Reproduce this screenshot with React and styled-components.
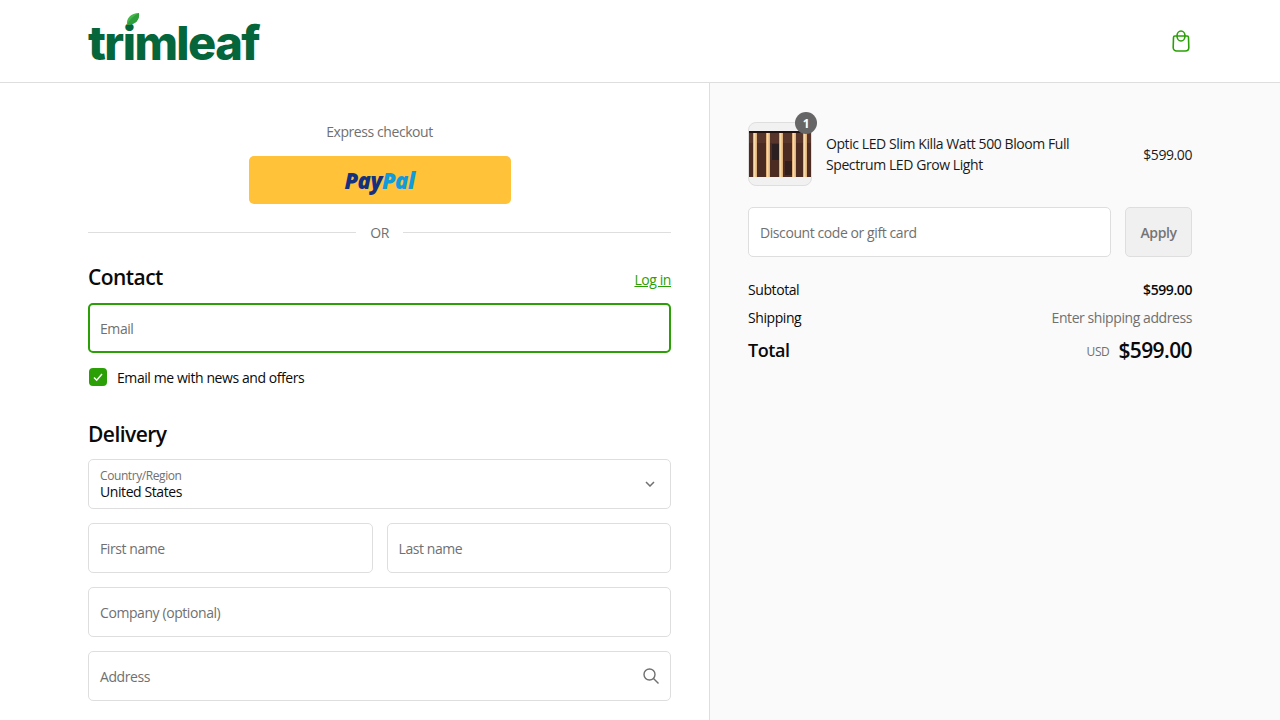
import React from 'react';
import styled, { createGlobalStyle } from 'styled-components';

const Global = createGlobalStyle`
  html, body { margin: 0; padding: 0; height: 720px; overflow: hidden; background: #fff; }
  * { box-sizing: border-box; }
  body { font-family: "Open Sans", "Noto Sans", sans-serif; font-size: 14px; letter-spacing: -0.42px; color: #0a0a0a; }
`;

const Page = styled.div`height: 720px; display: flex; flex-direction: column;`;
const Header = styled.header`
  height: 83px; flex: none; border-bottom: 1px solid #dedede; padding: 0 88px;
  display: flex; align-items: center; justify-content: space-between;
`;
const Logo = styled.div`
  position: relative; font-family: Inter, sans-serif; font-weight: 800; font-size: 47px; line-height: 50px;
  letter-spacing: -1.6px; color: #04663a; margin-top: 3px; width: 180px;
`;
const LeafIcon = styled.svg`position: absolute; left: 38px; top: -6px;`;
const BagButton = styled.a`display: flex; color: #2a9f06;`;
const Main = styled.main`flex: 1; display: grid; grid-template-columns: 710px 570px; min-height: 0;`;
const Left = styled.section`border-right: 1px solid #dedede; padding: 38px 38px 0 88px; display: flex; flex-direction: column;`;
const Right = styled.aside`background: #fafafa; padding: 38px 88px 0 38px; display: flex; flex-direction: column;`;

const Express = styled.div`text-align: center; color: #707070; font-size: 14px; line-height: 22px; height: 22px;`;
const PayButton = styled.div`
  width: 262px; height: 48px; margin: 13px auto 0; border-radius: 5px; background: #ffc238;
  display: flex; align-items: center; justify-content: center;
  font-family: "Open Sans", sans-serif; font-weight: 800; font-style: italic; font-size: 22px; letter-spacing: -0.5px;
`;
const PayDark = styled.span`color: #14307f;`;
const PayLight = styled.span`color: #0f9bdc;`;
const Divider = styled.div`
  display: flex; align-items: center; gap: 14px; margin-top: 17px; height: 22px; color: #707070; font-size: 14px;
  &::before, &::after { content: ""; flex: 1; height: 1px; background: #dedede; }
`;
const HeadRow = styled.div`display: flex; align-items: center; justify-content: space-between; margin-top: ${p => p.$top}px; height: 30px;`;
const Heading = styled.h2`margin: 0; font-size: 21px; font-weight: 600; line-height: 30px; letter-spacing: -0.55px; color: #0a0a0a;`;
const LogIn = styled.a`color: #2a9f06; text-decoration: underline; font-size: 14px; margin-top: 5px;`;
const Field = styled.div`
  position: relative; height: 50px; flex: 1; min-width: 0; background: #fff; border-radius: 5px;
  border: ${p => (p.$focus ? '2px solid #2a9f06' : '1px solid #dedede')};
  padding: 0 ${p => (p.$focus ? 10 : 11)}px; display: flex; align-items: center; justify-content: space-between;
  color: #707070; font-size: 14px; margin-top: ${p => p.$top || 0}px;
`;
const FieldRow = styled.div`display: flex; gap: 14px; margin-top: 14px;`;
const CheckRow = styled.label`display: flex; align-items: center; gap: 10px; margin: 15px 0 0 1px; height: 18px; color: #0a0a0a;`;
const CheckBox = styled.span`width: 18px; height: 18px; border-radius: 4px; background: #2a9f06; display: flex; align-items: center; justify-content: center; color: #fff;`;
const SelectBody = styled.div`display: flex; flex-direction: column;`;
const SelectLabel = styled.span`font-size: 12px; line-height: 16px; color: #707070;`;
const SelectValue = styled.span`font-size: 14px; line-height: 16px; color: #0a0a0a;`;
const FieldIcon = styled.svg`flex: none; color: #707070;`;

const Product = styled.div`display: flex; align-items: center; height: 64px; margin-top: 1px;`;
const Thumb = styled.div`
  position: relative; width: 64px; height: 64px; flex: none; border-radius: 8px; border: 1px solid #dedede; background: #f1f1f1;
  display: flex; align-items: center;
`;
const Badge = styled.span`
  position: absolute; top: -11px; right: -6px; width: 22px; height: 22px; border-radius: 50%; background: #666;
  color: #fff; font-size: 12px; font-weight: 700; display: flex; align-items: center; justify-content: center;
`;
const ProductName = styled.div`flex: 1; margin-left: 14px; line-height: 21px; max-width: 270px; color: #1a1a1a;`;
const Price = styled.div`margin-left: auto; color: #1a1a1a;`;
const Discount = styled.div`display: flex; gap: 14px; margin-top: 21px;`;
const Apply = styled.div`
  width: 67px; height: 50px; flex: none; background: #f0f0f0; border: 1px solid #dedede; border-radius: 5px;
  display: flex; align-items: center; justify-content: center; font-weight: 600; color: #757575;
`;
const SumRow = styled.div`display: flex; align-items: center; justify-content: space-between; height: 20px; margin-top: ${p => p.$top}px;`;
const SumStrong = styled.span`font-weight: 600;`;
const Muted = styled.span`color: #707070;`;
const TotalRow = styled.div`display: flex; align-items: center; justify-content: space-between; margin-top: 8px; height: 30px;`;
const TotalLabel = styled.span`font-size: 18px; font-weight: 600; letter-spacing: -0.45px;`;
const TotalValue = styled.span`display: flex; align-items: center; gap: 9px;`;
const Currency = styled.span`font-size: 12px; color: #707070; margin-top: 3px;`;
const Amount = styled.span`font-size: 21px; font-weight: 600; letter-spacing: -0.6px;`;

const stripes = [4, 17, 30, 43, 54];
const LedImage = () => (
  <svg width="62" height="46" viewBox="0 0 62 46">
    <rect width="62" height="46" fill="#4b2b22" />
    <rect y="0" width="62" height="2" fill="#241210" />
    <rect x="0" y="2" width="62" height="10" fill="#5f3c30" opacity=".6" />
    <rect x="23" y="13" width="9" height="16" fill="#2c1f22" />
    <rect x="36" y="30" width="8" height="14" fill="#33201d" />
    {stripes.map((x, i) => (
      <g key={x}>
        <rect x={x} y="2" width="4" height="44" fill="#e3b27c" />
        <rect x={x + 1} y="2" width="1.5" height="44" fill="#f5dca8" />
      </g>
    ))}
  </svg>
);

export default function App() {
  return (
    <Page>
      <Global />
      <Header>
        <Logo>
          trimleaf
          <LeafIcon width="14" height="14" viewBox="0 0 14 14">
            <path d="M1 13C0 6 5 1 13 1c1 7-4 12-12 12z" fill="#45b649" />
            <path d="M1 13C3 8 7 4 13 1c1 7-4 12-12 12z" fill="#2f9e3c" />
          </LeafIcon>
        </Logo>
        <BagButton>
          <svg width="22" height="24" viewBox="0 0 22 24" fill="none" stroke="currentColor" strokeWidth="1.6">
            <path d="M3.5 8.5c0-.8.6-1.5 1.4-1.5h12.2c.8 0 1.4.7 1.4 1.5l.3 10c0 2-1.5 3.5-3.5 3.5H6.7c-2 0-3.5-1.5-3.5-3.5z" />
            <ellipse cx="11" cy="7" rx="4" ry="5" />
          </svg>
        </BagButton>
      </Header>
      <Main>
        <Left>
          <Express>Express checkout</Express>
          <PayButton><PayDark>Pay</PayDark><PayLight>Pal</PayLight></PayButton>
          <Divider>OR</Divider>
          <HeadRow $top={19}>
            <Heading>Contact</Heading>
            <LogIn>Log in</LogIn>
          </HeadRow>
          <Field $focus $top={11} style={{ flex: 'none' }}>Email</Field>
          <CheckRow>
            <CheckBox>
              <svg width="12" height="12" viewBox="0 0 12 12" fill="none" stroke="currentColor" strokeWidth="1.5"><path d="M2 6.5l2.7 2.7L10 3" /></svg>
            </CheckBox>
            Email me with news and offers
          </CheckRow>
          <HeadRow $top={33}><Heading>Delivery</Heading></HeadRow>
          <Field $top={10} style={{ flex: 'none' }}>
            <SelectBody>
              <SelectLabel>Country/Region</SelectLabel>
              <SelectValue>United States</SelectValue>
            </SelectBody>
            <FieldIcon width="10" height="6" viewBox="0 0 10 6" fill="none" stroke="currentColor" strokeWidth="1.5" style={{ marginRight: 4 }}>
              <path d="M1 1l4 4 4-4" />
            </FieldIcon>
          </Field>
          <FieldRow>
            <Field>First name</Field>
            <Field>Last name</Field>
          </FieldRow>
          <FieldRow><Field>Company (optional)</Field></FieldRow>
          <FieldRow>
            <Field>
              Address
              <FieldIcon width="18" height="18" viewBox="0 0 18 18" fill="none" stroke="currentColor" strokeWidth="1.4" style={{ marginRight: -1 }}>
                <circle cx="7.5" cy="7.5" r="5.5" /><path d="M11.5 11.5l5 5" />
              </FieldIcon>
            </Field>
          </FieldRow>
        </Left>
        <Right>
          <Product>
            <Thumb>
              <LedImage />
              <Badge>1</Badge>
            </Thumb>
            <ProductName>Optic LED Slim Killa Watt 500 Bloom Full Spectrum LED Grow Light</ProductName>
            <Price>$599.00</Price>
          </Product>
          <Discount>
            <Field>Discount code or gift card</Field>
            <Apply>Apply</Apply>
          </Discount>
          <SumRow $top={22}><span>Subtotal</span><SumStrong>$599.00</SumStrong></SumRow>
          <SumRow $top={8}><span>Shipping</span><Muted>Enter shipping address</Muted></SumRow>
          <TotalRow>
            <TotalLabel>Total</TotalLabel>
            <TotalValue><Currency>USD</Currency><Amount>$599.00</Amount></TotalValue>
          </TotalRow>
        </Right>
      </Main>
    </Page>
  );
}
